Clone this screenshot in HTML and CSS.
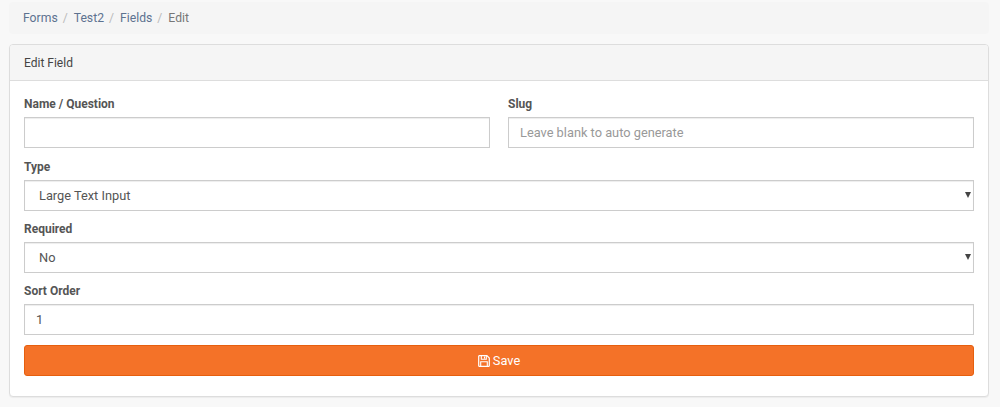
FILE: index.html
```html
<!DOCTYPE html>
<html lang="en">
<head>
<meta charset="utf-8">
<title>Edit Field</title>
<link rel="stylesheet" href="styles.css">
</head>
<body>
<nav class="breadcrumb">
  <a href="#">Forms</a><span class="sep">/</span><a href="#">Test2</a><span class="sep">/</span><a href="#">Fields</a><span class="sep">/</span><span class="current">Edit</span>
</nav>
<section class="panel">
  <header class="panel-heading">Edit Field</header>
  <form class="panel-body">
    <div class="row">
      <div class="field">
        <label>Name / Question</label>
        <input class="control" type="text">
      </div>
      <div class="field">
        <label>Slug</label>
        <input class="control" type="text" placeholder="Leave blank to auto generate">
      </div>
    </div>
    <div class="field">
      <label>Type</label>
      <div class="select-wrap">
        <select class="control select"><option>Large Text Input</option></select>
      </div>
    </div>
    <div class="field">
      <label>Required</label>
      <div class="select-wrap">
        <select class="control select"><option>No</option></select>
      </div>
    </div>
    <div class="field">
      <label>Sort Order</label>
      <input class="control" type="text" value="1">
    </div>
    <button class="save" type="button">
      <svg class="icon" viewBox="0 0 12 12" width="12" height="12" aria-hidden="true">
        <path d="M1.200.700h7.700l2.400 2.400v7.700a.5.500 0 0 1-.5.500H1.200a.5.500 0 0 1-.5-.500V1.200a.5.500 0 0 1 .5-.500z" fill="none" stroke="currentColor" stroke-width="1.200"/>
        <path d="M3.300.700v3.600h5V.700M6.500 1.500v2M2.700 11.300V6.700h6.600v4.600" fill="none" stroke="currentColor" stroke-width="1.100"/>
      </svg>
      Save
    </button>
  </form>
</section>
</body>
</html>
```
FILE: styles.css
```css
* { box-sizing: border-box; }
html, body { height: 100%; }
body {
  margin: 0;
  padding: 2px 11px 0 9px;
  background: #f8f8f8;
  color: #555;
  font: 13px/18px Roboto, "Liberation Sans", sans-serif;
  overflow: hidden;
}
.breadcrumb {
  height: 32px;
  padding: 7px 14px;
  margin-bottom: 10px;
  background: #f5f5f5;
  border-radius: 4px;
  color: #777;
  font-size: 12.200px;
}
.breadcrumb a { color: #5d7290; text-decoration: none; }
.sep { color: #bbb; padding: 0 6px 0 5px; }
.panel {
  height: 353px;
  background: #fff;
  border: 1px solid #ddd;
  border-radius: 4px;
  box-shadow: 0 1px 1px rgba(0,0,0,.05);
}
.panel-heading {
  height: 36px;
  padding: 9px 14px;
  background: #f5f5f5;
  border-bottom: 1px solid #ddd;
  border-radius: 3px 3px 0 0;
  color: #444;
  font-size: 12px;
}
.panel-body { padding: 14px 14px 0; }
.row { display: flex; gap: 18px; margin-bottom: 10px; }
.row .field { flex: 1; margin-bottom: 0; }
.field { margin-bottom: 9px; }
label {
  display: block;
  margin-bottom: 4px;
  color: #555;
  font-weight: 700;
  font-size: 12px;
}
.control {
  display: block;
  width: 100%;
  height: 31px;
  padding: 0 11px;
  background: #fff;
  border: 1px solid #ccc;
  border-radius: 0;
  box-shadow: inset 0 1px 1px rgba(0,0,0,.075);
  color: #555;
  font: 12.800px Roboto, "Liberation Sans", sans-serif;
  outline: 0;
}
.control::placeholder { color: #999; opacity: 1; }
.select-wrap { position: relative; }
.select-wrap::after {
  content: "";
  position: absolute;
  right: 3px;
  top: 12px;
  border-style: solid;
  border-width: 6px 3px 0;
  border-color: #444 transparent transparent;
}
.select { appearance: none; padding-left: 14px; }
.save {
  display: flex;
  align-items: center;
  justify-content: center;
  gap: 3px;
  width: 100%;
  height: 31px;
  margin-top: 10px;
  background: #f47228;
  border: 1px solid #e65f0e;
  border-radius: 3px;
  color: #fff;
  font: 12.800px Roboto, "Liberation Sans", sans-serif;
}
.icon { display: block; }
```
